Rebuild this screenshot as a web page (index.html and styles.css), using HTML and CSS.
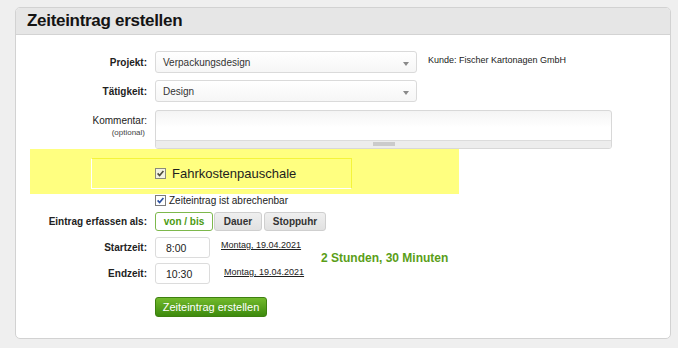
FILE: index.html
```html
<!DOCTYPE html>
<html lang="de">
<head>
<meta charset="utf-8">
<title>Zeiteintrag erstellen</title>
<link rel="stylesheet" href="styles.css">
</head>
<body>
<div class="panel">
  <div class="panel-head"><h1>Zeiteintrag erstellen</h1></div>
  <div class="panel-body">
    <div class="row r1">
      <div class="lbl">Projekt:</div>
      <div class="select"><span>Verpackungsdesign</span><i class="arrow"></i></div>
      <div class="kunde">Kunde: Fischer Kartonagen GmbH</div>
    </div>
    <div class="row r2">
      <div class="lbl">Tätigkeit:</div>
      <div class="select"><span>Design</span><i class="arrow"></i></div>
    </div>
    <div class="row r3">
      <div class="lbl lbl-comment">
        <div>Kommentar:</div>
        <div class="opt">(optional)</div>
      </div>
      <div class="textarea">
        <div class="ta-space"></div>
        <div class="ta-grip"><span class="ta-handle"></span></div>
      </div>
    </div>
    <div class="highlight">
      <div class="hl-box">
        <svg class="cb" width="11" height="11" viewBox="0 0 11 11"><rect x="0.5" y="0.5" width="10" height="10" fill="#f3f3e2" stroke="#8a8a7a"/><path d="M2.6 5.4 L4.6 7.6 L8.4 3" fill="none" stroke="#4b4b3c" stroke-width="1.6"/></svg>
        <span class="hl-text">Fahrkostenpauschale</span>
      </div>
    </div>
    <div class="check-row">
      <svg class="cb" width="11" height="11" viewBox="0 0 11 11"><rect x="0.5" y="0.5" width="10" height="10" fill="#ffffff" stroke="#7c7c7c"/><path d="M2.6 5.4 L4.6 7.6 L8.4 3" fill="none" stroke="#2b4f9e" stroke-width="1.6"/></svg>
      <span>Zeiteintrag ist abrechenbar</span>
    </div>
    <div class="row r-mode">
      <div class="lbl">Eintrag erfassen als:</div>
      <div class="toggle">
        <span class="tg tg-on">von / bis</span>
        <span class="tg tg-dauer">Dauer</span>
        <span class="tg tg-stopp">Stoppuhr</span>
      </div>
    </div>
    <div class="times">
      <div class="time-rows">
        <div class="row r-time">
          <div class="lbl">Startzeit:</div>
          <div class="tinput">8:00</div>
          <a class="date date-start" href="#">Montag, 19.04.2021</a>
        </div>
        <div class="row r-time">
          <div class="lbl">Endzeit:</div>
          <div class="tinput">10:30</div>
          <a class="date date-end" href="#">Montag, 19.04.2021</a>
        </div>
      </div>
      <div class="duration">2 Stunden, 30 Minuten</div>
    </div>
    <div class="submit-row">
      <span class="btn">Zeiteintrag erstellen</span>
    </div>
  </div>
</div>
</body>
</html>
```
FILE: styles.css
```css
* { box-sizing: border-box; }
body {
  margin: 0;
  background: #efefef;
  font-family: "Liberation Sans", Arial, sans-serif;
  color: #222;
}
.panel {
  margin: 7px 0 0 15px;
  width: 656px;
  background: #fff;
  border: 1px solid #d2d2d2;
  border-radius: 5px;
}
.panel-head {
  height: 27px;
  background: #e6e6e6;
  border-bottom: 1px solid #d3d3d3;
  border-radius: 4px 4px 0 0;
  padding-left: 11px;
  display: flex;
  align-items: center;
}
.panel-head h1 {
  margin: 0;
  font-size: 17px;
  font-weight: bold;
  color: #141414;
  letter-spacing: -0.3px;
}
.panel-body {
  padding: 16px 0 21px;
}
.row {
  display: flex;
  align-items: center;
  gap: 8px;
}
.lbl {
  flex: none;
  width: 131px;
  text-align: right;
  font-size: 10px;
  font-weight: bold;
  color: #222;
}
.r1 { margin-bottom: 7px; align-items: flex-start; }
.r1 .lbl { align-self: center; }
.r2 { margin-bottom: 8px; }
.select {
  position: relative;
  width: 262px;
  height: 22px;
  border: 1px solid #dadada;
  border-radius: 3px;
  background: linear-gradient(#ffffff, #f6f6f6);
  padding-left: 7px;
  display: flex;
  align-items: center;
  font-size: 10px;
  color: #333;
}
.arrow {
  position: absolute;
  right: 7px;
  top: 10px;
  width: 0;
  height: 0;
  border-left: 3px solid transparent;
  border-right: 3px solid transparent;
  border-top: 4px solid #8a8a8a;
}
.kunde {
  font-size: 9px;
  color: #222;
  margin-left: 3px;
  margin-top: 4px;
}
.r3 { align-items: flex-start; }
.lbl-comment {
  font-weight: normal;
  padding-top: 5px;
  line-height: 12px;
}
.lbl-comment .opt {
  font-size: 8px;
  line-height: 11px;
  color: #444;
  padding-right: 2px;
}
.textarea {
  width: 457px;
  height: 39px;
  border: 1px solid #d8d8d8;
  border-radius: 3px;
  background: linear-gradient(#f4f4f4, #ffffff 45%);
  display: flex;
  flex-direction: column;
  overflow: hidden;
}
.ta-space { flex: 1; }
.ta-grip {
  height: 8px;
  background: #ededed;
  border-top: 1px solid #dcdcdc;
  display: flex;
  justify-content: center;
  padding-top: 1px;
}
.ta-handle {
  width: 22px;
  height: 4px;
  background: #cbcbcb;
}
.highlight {
  margin-left: 14px;
  width: 429px;
  height: 45px;
  background: #ffff80;
  padding-top: 9px;
}
.hl-box {
  margin-left: 61px;
  width: 261px;
  height: 31px;
  border: 1px solid;
  border-color: #f4f43a #f4f43a #ffffff #ffffff;
  display: flex;
  align-items: center;
  gap: 6px;
  padding-left: 63px;
}
.cb { flex: none; display: block; }
.hl-text {
  font-size: 13px;
  color: #1e1e1e;
}
.check-row {
  margin-left: 139px;
  height: 12px;
  display: flex;
  align-items: center;
  gap: 3px;
  font-size: 10px;
  color: #222;
}
.r-mode { margin-top: 6px; }
.toggle {
  display: flex;
  gap: 1px;
}
.tg {
  height: 19px;
  display: flex;
  align-items: center;
  justify-content: center;
  font-size: 10px;
  font-weight: bold;
  border-radius: 3px;
  border: 1px solid #cfcfcf;
  background: linear-gradient(#efefef, #e1e1e1);
  color: #333;
}
.tg-on {
  width: 58px;
  background: #fff;
  border-color: #7db84c;
  color: #4c9a12;
}
.tg-dauer { width: 48px; }
.tg-stopp { width: 62px; margin-left: 1px; }
.times {
  margin-top: 6px;
  display: flex;
  align-items: center;
}
.time-rows {
  width: 290px;
  display: flex;
  flex-direction: column;
  gap: 5px;
}
.r-time { align-items: flex-start; }
.r-time .lbl { align-self: center; }
.tinput {
  width: 55px;
  height: 21px;
  border: 1px solid #dcdcdc;
  border-radius: 3px;
  padding-left: 10px;
  display: flex;
  align-items: center;
  font-size: 10.5px;
  color: #222;
}
.date {
  font-size: 9px;
  line-height: 11px;
  color: #222;
  text-decoration: underline;
  margin-top: 3px;
}
.date-start { margin-left: 3px; }
.date-end { margin-left: 6px; margin-top: 4px; }
.duration {
  margin-left: 15px;
  margin-bottom: 6px;
  font-size: 12px;
  font-weight: bold;
  color: #5a9e18;
}
.submit-row {
  margin-top: 13px;
  margin-left: 139px;
}
.btn {
  width: 112px;
  height: 20px;
  display: flex;
  align-items: center;
  justify-content: center;
  font-size: 11px;
  color: #fff;
  border: 1px solid #3e8010;
  border-radius: 3px;
  background: linear-gradient(#72ba2c, #3d8a0d);
}
```
